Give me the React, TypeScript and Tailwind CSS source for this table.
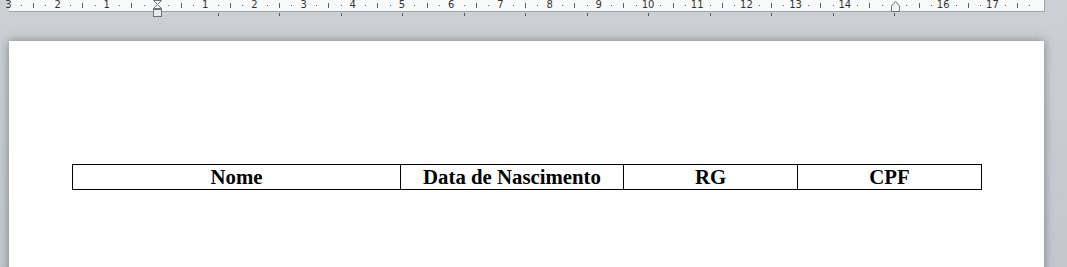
import React from 'react';

const CM = 49.2;
const ORIGIN = 156;

const numbers = [-3, -2, -1, 1, 2, 3, 4, 5, 6, 7, 8, 9, 10, 11, 12, 13, 14, 16, 17];

const minorTicks: { x: number; half: boolean }[] = [];
for (let k = -3; k <= 17; k++) {
  [0.25, 0.5, 0.75].forEach(f => {
    const x = ORIGIN + (k + f) * CM;
    if (x > 9 && x < 1044) minorTicks.push({ x, half: f === 0.5 });
  });
}

const tabStops = Array.from({ length: 12 }, (_, i) => ORIGIN + (i + 1) * 61.5);

const columns = [
  { label: 'Nome', width: 'w-[328px] border-r' },
  { label: 'Data de Nascimento', width: 'w-[223px] border-r' },
  { label: 'RG', width: 'w-[174px] border-r' },
  { label: 'CPF', width: 'w-[183px]' },
];

const Ruler: React.FC = () => (
  <div className="relative h-[41px]">
    {/* ruler strip */}
    <div className="absolute left-[9px] top-0 w-[1036px] h-[12px] bg-[#f9fafb] border-b border-r border-[#9da2a8]" />

    {numbers.map(n => (
      <span
        key={n}
        className="absolute top-[-1px] text-[10px] leading-[12px] text-[#333] -translate-x-1/2"
        style={{ left: ORIGIN + n * CM, fontFamily: '"DejaVu Sans", sans-serif' }}
      >
        {Math.abs(n)}
      </span>
    ))}

    {minorTicks.map((t, i) =>
      Math.abs(t.x - 895) < 4 ? null : (
        <span
          key={i}
          className={`absolute w-px bg-[#5b5f64] ${t.half ? 'top-[3px] h-[5px]' : 'top-[5px] h-px'}`}
          style={{ left: Math.round(t.x) }}
        />
      )
    )}

    {tabStops.map(x => (
      <span key={x} className="absolute top-[13px] w-px h-[3px] bg-[#55595e]" style={{ left: Math.round(x) }} />
    ))}

    {/* first line / hanging indent marker */}
    <svg className="absolute left-[152px] top-0" width="11" height="18" viewBox="0 0 11 18">
      <path d="M1.5 0.5 L9.5 0.5 L5.5 4.5 Z" fill="#f4f5f6" stroke="#6d7278" />
      <path d="M5.5 4.5 L9.5 8.5 L1.5 8.5 Z" fill="#f4f5f6" stroke="#6d7278" />
      <rect x="1.5" y="9.5" width="8" height="7" fill="#e9ebee" stroke="#6d7278" />
    </svg>

    {/* right indent marker */}
    <svg className="absolute left-[890px] top-0" width="11" height="13" viewBox="0 0 11 13">
      <path d="M1.5 11.5 L1.5 6 L5.5 1.5 L9.5 6 L9.5 11.5 Z" fill="#f4f5f6" stroke="#6d7278" />
    </svg>
  </div>
);

export default function App() {
  return (
    <div className="w-[1067px] h-[267px] overflow-hidden bg-gradient-to-b from-[#ccd0d5] to-[#c4c8ce]">
      <Ruler />
      <div className="ml-[9px] w-[1035px] h-[240px] bg-white shadow-[0_0_9px_rgba(60,64,70,0.55)] pt-[123px] pl-[63px]">
        <div
          className="flex w-[910px] border border-black text-black font-bold text-[20.8px] leading-[24px]"
          style={{ fontFamily: '"Liberation Serif", "Times New Roman", serif' }}
        >
          {columns.map(c => (
            <div key={c.label} className={`${c.width} border-black h-[24px] text-center`}>
              {c.label}
            </div>
          ))}
        </div>
      </div>
    </div>
  );
}
